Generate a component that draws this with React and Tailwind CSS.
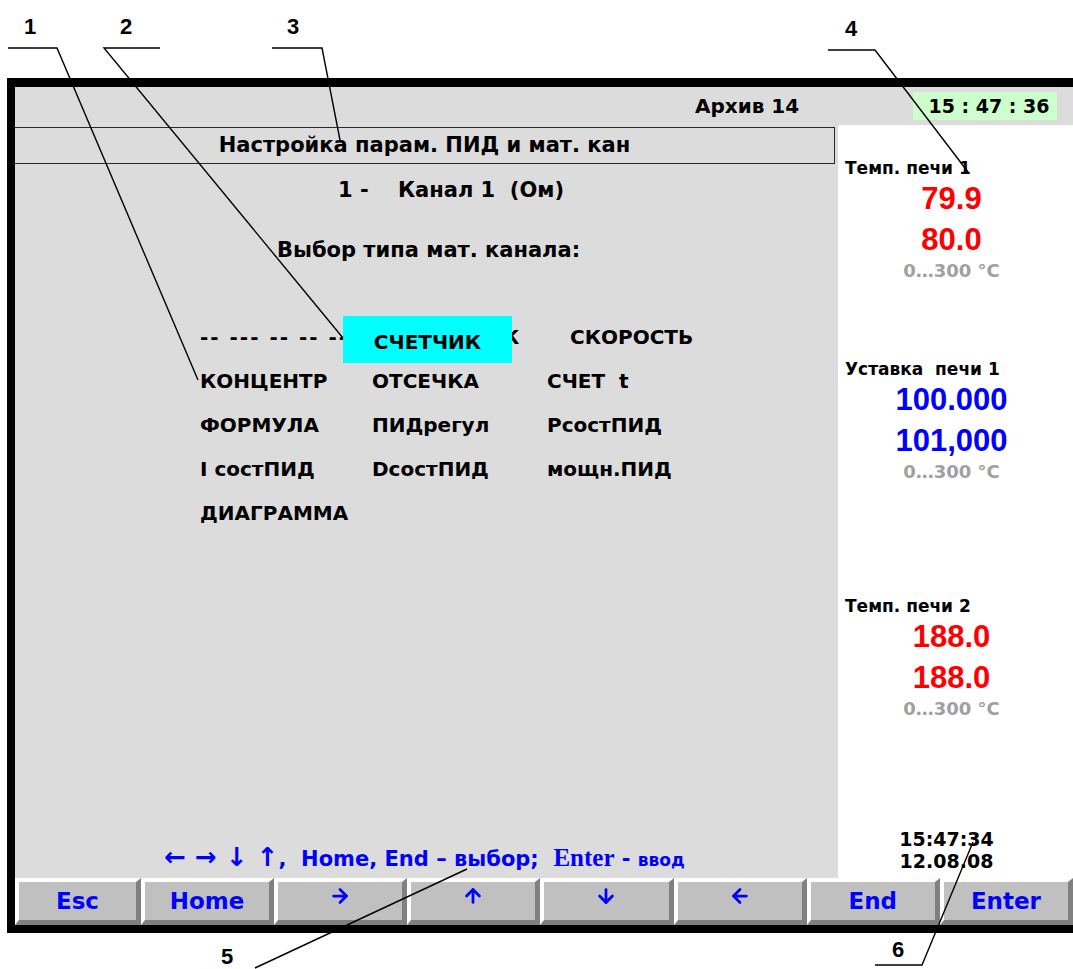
import React from 'react';
import { ArrowRight, ArrowUp, ArrowDown, ArrowLeft } from 'lucide-react';

const keys = [
  { name: 'Esc' },
  { name: 'Home' },
  { name: 'right', icon: ArrowRight },
  { name: 'up', icon: ArrowUp },
  { name: 'down', icon: ArrowDown },
  { name: 'left', icon: ArrowLeft },
  { name: 'End' },
  { name: 'Enter' },
];

const rows = [
  ['КОНЦЕНТР', 'ОТСЕЧКА', 'СЧЕТ  t'],
  ['ФОРМУЛА', 'ПИДрегул', 'РсостПИД'],
  ['I состПИД', 'DсостПИД', 'мощн.ПИД'],
  ['ДИАГРАММА', '', ''],
];

const Readout = ({ label, a, b, color }) => (
  <div className="flex flex-col">
    <div className="h-[20px] leading-[20px] pl-[7px] text-[17px] text-black whitespace-pre">{label}</div>
    <div className={`h-[42px] leading-[42px] text-center pr-[8px] text-[31px] font-['Liberation_Sans',sans-serif] ${color}`}>{a}</div>
    <div className={`h-[40px] leading-[40px] text-center pr-[8px] text-[31px] font-['Liberation_Sans',sans-serif] ${color}`}>{b}</div>
    <div className="h-[22px] leading-[22px] text-center pr-[8px] text-[18px] text-[#a0a0a0]">0…300 °C</div>
  </div>
);

export default function App() {
  return (
    <div className="relative w-[1073px] h-[969px] bg-white overflow-hidden font-['DejaVu_Sans',sans-serif] font-bold">
      <div className="h-[78px]" />

      {/* Device screen */}
      <div className="ml-[7px] h-[855px] border-l-[8px] border-t-[9px] border-b-[8px] border-black flex flex-col">
        {/* Status bar */}
        <div className="h-[38px] bg-[#dcdcdc] flex items-center">
          <span className="ml-[680px] text-[20px] text-black">Архив 14</span>
          <div className="ml-auto mr-[16px] w-[144px] h-[28px] bg-[#ccffcc] flex items-center justify-center pl-[8px] text-[19px] text-black">
            15 : 47 : 36
          </div>
        </div>

        <div className="h-[753px] flex">
          {/* Left menu panel */}
          <div className="w-[823px] bg-[#dcdcdc] flex flex-col">
            <div className="mt-[2px] w-[820px] h-[37px] border border-[#2a2a2a] border-l-0 flex items-center justify-center text-[21px] text-black">
              Настройка парам. ПИД и мат. кан
            </div>
            <div className="mt-[14px] h-[24px] leading-[24px] pl-[323px] text-[21px] text-black whitespace-pre">1 -    Канал 1  (Ом)</div>
            <div className="mt-[36px] h-[24px] leading-[24px] text-center pl-[4px] text-[21px] text-black">Выбор типа мат. канала:</div>

            <div className="mt-[53px] pl-[185px] flex flex-col text-[20px] text-black">
              <div className="relative h-[44px] flex items-center">
                <span className="w-[172px] whitespace-pre tracking-[2px]">-- --- -- -- --</span>
                <span className="w-[198px] pl-[40px]">СЧЕТЧИК</span>
                <span>СКОРОСТЬ</span>
                <div className="absolute left-[143px] top-[1px] w-[169px] h-[47px] bg-[#00ffff] flex items-center justify-center pt-[4px]">
                  СЧЕТЧИК
                </div>
              </div>
              {rows.map((r) => (
                <div key={r[0]} className="h-[44px] flex items-center">
                  <span className="w-[172px] whitespace-pre">{r[0]}</span>
                  <span className="w-[175px] whitespace-pre">{r[1]}</span>
                  <span className="whitespace-pre">{r[2]}</span>
                </div>
              ))}
            </div>

            <div className="mt-auto mb-[8px] h-[26px] leading-[26px] text-center pr-[4px] text-[21px] text-[#0000ff] whitespace-pre">
              <span className="text-[26px]">← → ↓ ↑</span>,  Home, End – выбор;  <span className="font-['Liberation_Serif',serif] text-[25px]">Enter</span> - <span className="text-[17px]">ввод</span>
            </div>
          </div>

          {/* Right readouts */}
          <div className="flex-1 bg-white flex flex-col pt-[33px]">
            <Readout label="Темп. печи 1" a="79.9" b="80.0" color="text-[#ff0000]" />
            <div className="mt-[77px]">
              <Readout label="Уставка  печи 1" a="100.000" b="101,000" color="text-[#0000ff]" />
            </div>
            <div className="mt-[113px]">
              <Readout label="Темп. печи 2" a="188.0" b="188.0" color="text-[#ff0000]" />
            </div>
            <div className="mt-auto mb-[6px] flex flex-col items-center pr-[18px] text-[19px] text-black leading-[22px]">
              <span>15:47:34</span>
              <span>12.08.08</span>
            </div>
          </div>
        </div>

        {/* Soft keys */}
        <div className="h-[47px] flex">
          {keys.map((k, i) => (
            <div
              key={k.name}
              className={`${i === 0 ? 'w-[126px]' : 'flex-1'} bg-[#c0c0c0] border-t-[4px] border-l-[4px] border-r-[5px] border-b-[5px] border-t-white border-l-white border-r-[#808080] border-b-[#808080] flex items-center justify-center text-[#0000ff] text-[23px]`}
            >
              {k.icon ? <k.icon className="w-[22px] h-[22px] mb-[10px]" strokeWidth={3} /> : k.name}
            </div>
          ))}
        </div>
      </div>

      {/* Callouts */}
      <svg className="absolute inset-0 pointer-events-none" width="1073" height="969" fill="none" stroke="black" strokeWidth="1.4">
        <path d="M8 48 H57 L198 380" />
        <path d="M160 48 H104 L343 338" />
        <path d="M272 48 H322 L340 140" />
        <path d="M828 50 H875 L968 172" />
        <path d="M255 968 L467 869" />
        <path d="M875 965 H922 L973 842" />
      </svg>
      <div className="absolute inset-0 pointer-events-none font-['Liberation_Sans',sans-serif] text-[22px] text-black">
        <span className="absolute left-[24px] top-[10px]">1</span>
        <span className="absolute left-[120px] top-[10px]">2</span>
        <span className="absolute left-[287px] top-[10px]">3</span>
        <span className="absolute left-[845px] top-[12px]">4</span>
        <span className="absolute left-[221px] top-[940px]">5</span>
        <span className="absolute left-[892px] top-[933px]">6</span>
      </div>
    </div>
  );
}
